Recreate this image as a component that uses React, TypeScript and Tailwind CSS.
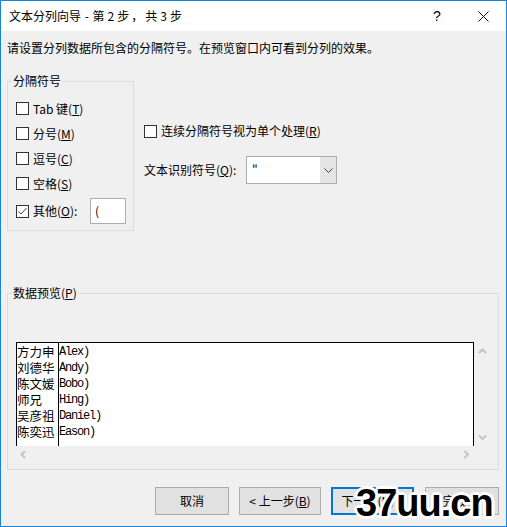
import React from "react";

function Box({ checked }: { checked?: boolean }) {
  return (
    <span className="w-[13px] h-[13px] border border-[#333333] bg-white flex items-center justify-center shrink-0">
      {checked && (
        <svg width="11" height="11" viewBox="0 0 11 11">
          <path d="M1.5 5.5 L4 8 L9.5 2" fill="none" stroke="#444444" strokeWidth="1" />
        </svg>
      )}
    </span>
  );
}

function Chev({ dir }: { dir: "up" | "down" | "left" | "right" }) {
  const d =
    dir === "up"
      ? "M1 5 L4.5 1.5 L8 5"
      : dir === "down"
      ? "M1 1.5 L4.5 5 L8 1.5"
      : dir === "left"
      ? "M5 1 L1.5 4.5 L5 8"
      : "M1.5 1 L5 4.5 L1.5 8";
  const w = dir === "up" || dir === "down" ? 9 : 7;
  const h = dir === "up" || dir === "down" ? 7 : 9;
  return (
    <svg width={w} height={h} viewBox={`0 0 ${w} ${h}`}>
      <path d={d} fill="none" stroke="#c4c4c4" strokeWidth="2" />
    </svg>
  );
}

const names = ["方力申", "刘德华", "陈文媛", "师兄", "吴彦祖", "陈奕迅"];
const vals = ["Alex)", "Andy)", "Bobo)", "Hing)", "Daniel)", "Eason)"];

export default function App() {
  return (
    <div className="w-[507px] h-[527px] relative bg-[#f0f0f0] border border-[#1883d7] flex flex-col font-['Noto_Sans_CJK_SC',sans-serif] text-[12px] text-black overflow-hidden">
      {/* title bar */}
      <div className="h-[30px] bg-white flex items-center shrink-0">
        <span className="pl-[8px] flex-1 leading-[16px] whitespace-pre">
          文本分列向导 <span className="mx-[1px]">-</span> 第<span className="mx-[3px]">2</span>步<span className="mx-[2px]">，</span>共<span className="mx-[3px]">3</span>步
        </span>
        <div className="w-[46px] h-full flex items-center justify-center text-[14px] font-['Liberation_Sans',sans-serif]">?</div>
        <div className="w-[46px] h-full flex items-center justify-center">
          <svg width="11" height="11" viewBox="0 0 11 11">
            <path d="M0.5 0.5 L10.5 10.5 M10.5 0.5 L0.5 10.5" stroke="#111111" strokeWidth="1" />
          </svg>
        </div>
      </div>

      {/* body */}
      <div className="flex-1 flex flex-col pl-[6px] pr-[7px]">
        <div className="mt-[9px] leading-[16px]">请设置分列数据所包含的分隔符号。在预览窗口内可看到分列的效果。</div>

        <div className="flex items-start mt-[25px]">
          {/* group 1 */}
          <div className="relative w-[127px] border border-[#dcdcdc] pt-[14px] pb-[6px] pl-[8px] flex flex-col">
            <span className="absolute left-[4px] top-[-9px] px-[1px] bg-[#f0f0f0] leading-[16px]">分隔符号</span>
            <div className="h-[25px] flex items-center gap-[4px]">
              <Box />
              <span className="leading-[16px]">Tab 键(<u>T</u>)</span>
            </div>
            <div className="h-[25px] flex items-center gap-[4px]">
              <Box />
              <span className="leading-[16px]">分号(<u>M</u>)</span>
            </div>
            <div className="h-[25px] flex items-center gap-[4px]">
              <Box />
              <span className="leading-[16px]">逗号(<u>C</u>)</span>
            </div>
            <div className="h-[25px] flex items-center gap-[4px]">
              <Box />
              <span className="leading-[16px]">空格(<u>S</u>)</span>
            </div>
            <div className="h-[26px] mt-[2px] flex items-center gap-[4px]">
              <Box checked />
              <span className="w-[53px] leading-[16px]">其他(<u>O</u>):</span>
              <div className="w-[36px] h-[26px] border border-[#adadad] bg-white flex items-center pl-[4px] leading-[16px]">(</div>
            </div>
          </div>

          {/* right column */}
          <div className="ml-[10px] pt-[42px] flex flex-col">
            <div className="h-[16px] flex items-center gap-[4px]">
              <Box />
              <span className="leading-[16px]">连续分隔符号视为单个处理(<u>R</u>)</span>
            </div>
            <div className="mt-[17px] h-[28px] flex items-center">
              <span className="w-[102px] leading-[16px]">文本识别符号(<u>Q</u>):</span>
              <div className="w-[91px] h-[28px] border border-[#adadad] flex">
                <div className="flex-1 bg-white pl-[5px] pt-[4px] leading-[16px]">"</div>
                <div className="w-[16px] bg-[#e5e5e5] flex items-center justify-center">
                  <svg width="9" height="5" viewBox="0 0 9 5">
                    <path d="M0.5 0.5 L4.5 4.5 L8.5 0.5" fill="none" stroke="#444444" strokeWidth="1" />
                  </svg>
                </div>
              </div>
            </div>
          </div>
        </div>

        {/* preview group */}
        <div className="relative mt-[62px] h-[177px] border border-[#dcdcdc] pt-[48px] pl-[8px]">
          <span className="absolute left-[4px] top-[-9px] px-[1px] bg-[#f0f0f0] leading-[16px]">数据预览(<u>P</u>)</span>
          <div className="w-[475px] h-[121px] grid grid-cols-[458px_17px] grid-rows-[104px_17px]">
            <div className="bg-white border-t border-l border-r border-black flex">
              <div className="w-[42px] border-r border-black pt-[1px] flex flex-col">
                {names.map((n) => (
                  <div key={n} className="h-[16px] leading-[16px] text-[12.5px] whitespace-nowrap">{n}</div>
                ))}
              </div>
              <div className="flex-1 pt-[1px] flex flex-col">
                {vals.map((v) => (
                  <div key={v} className="h-[16px] leading-[16px] text-[12px] tracking-[-1.2px] font-['Liberation_Mono',monospace] whitespace-pre">{v}</div>
                ))}
              </div>
            </div>
            <div className="flex flex-col items-center justify-between pt-[6px] pb-[5px]">
              <Chev dir="up" />
              <Chev dir="down" />
            </div>
            <div className="flex items-center justify-between px-[4px]">
              <Chev dir="left" />
              <Chev dir="right" />
            </div>
            <div />
          </div>
        </div>

        {/* buttons */}
        <div className="mt-[17px] flex justify-end">
          <div className="w-[74px] h-[28px] bg-[#e1e1e1] border border-[#adadad] flex items-center justify-center leading-[16px]">取消</div>
          <div className="ml-[10px] w-[82px] h-[28px] bg-[#e1e1e1] border border-[#adadad] flex items-center justify-center leading-[16px]">&lt; 上一步(<u>B</u>)</div>
          <div className="ml-[10px] w-[83px] h-[28px] bg-[#e1e1e1] border-2 border-[#0078d7] flex items-center justify-center leading-[16px]">下一步(<u>N</u>) &gt;</div>
          <div className="ml-[11px] w-[74px] h-[28px] bg-[#e1e1e1] border border-[#adadad] flex items-center justify-center leading-[16px]">完成(<u>F</u>)</div>
        </div>
      </div>

      {/* watermark */}
      <div className="absolute left-[355px] top-[483px] text-[38px] leading-none font-bold font-['Liberation_Sans',sans-serif] tracking-[-1px] text-black whitespace-nowrap [text-shadow:2px_0_#fff,-2px_0_#fff,0_2px_#fff,0_-2px_#fff,2px_2px_#fff,-2px_-2px_#fff,2px_-2px_#fff,-2px_2px_#fff,3px_0_#fff,-3px_0_#fff,0_3px_#fff,0_-3px_#fff]">
        37uu.cn
      </div>
    </div>
  );
}
